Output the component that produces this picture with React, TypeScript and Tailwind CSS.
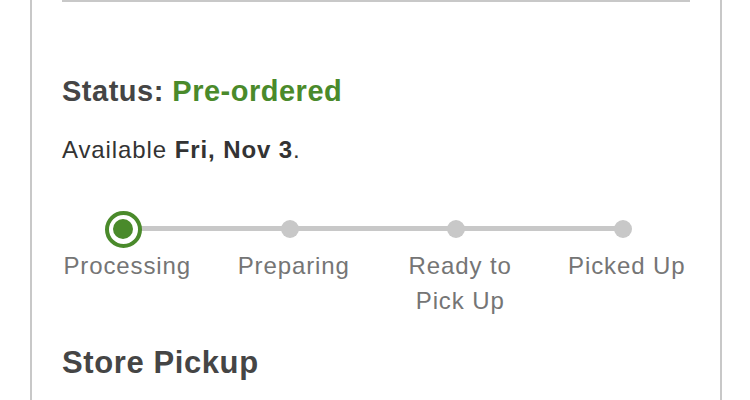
import React from "react";

const steps = [
  { label: ["Processing"], active: true },
  { label: ["Preparing"], active: false },
  { label: ["Ready to", "Pick Up"], active: false },
  { label: ["Picked Up"], active: false },
];

export default function App() {
  return (
    <div
      className="w-[750px] h-[400px] overflow-hidden bg-white"
      style={{ fontFamily: '"Liberation Sans", Arial, Helvetica, sans-serif' }}
    >
      <div className="ml-[30px] w-[692px] h-[400px] border-x-2 border-[#c8c8c8] px-[30px]">
        <div className="h-[2px] bg-[#c8c8c8]" />
        <div className="mt-[72px] text-[29px] leading-[34px] font-bold tracking-[0.5px] text-[#454545]">
          Status: <span className="text-[#4a8a2b]">Pre-ordered</span>
        </div>
        <div className="mt-[27px] text-[24px] leading-[30px] tracking-[0.9px] text-[#333333]">
          Available <span className="font-bold">Fri, Nov 3</span>.
        </div>
        <div className="relative mt-[46px] ml-[-22px] w-[666px] grid grid-cols-4">
          <div className="absolute left-[83px] right-[83px] top-[15px] h-[5px] bg-[#c8c8c8]" />
          {steps.map((s, i) => (
            <div key={i} className="flex flex-col items-center">
              <div className="relative z-10 h-[36px] flex items-center justify-center">
                {s.active ? (
                  <div className="w-[37px] h-[37px] rounded-full border-[4px] border-[#4a8a2b] bg-white flex items-center justify-center">
                    <div className="w-[20px] h-[20px] rounded-full bg-[#4a8a2b]" />
                  </div>
                ) : (
                  <div className="w-[18px] h-[18px] rounded-full bg-[#c8c8c8]" />
                )}
              </div>
              <div className="mt-px pl-[8px] text-center text-[24px] leading-[35px] tracking-[0.9px] text-[#757575] whitespace-nowrap">
                {s.label.map((l, j) => (
                  <div key={j}>{l}</div>
                ))}
              </div>
            </div>
          ))}
        </div>
        <div className="mt-[27px] text-[31px] leading-[36px] font-bold tracking-[0.6px] text-[#454545]">
          Store Pickup
        </div>
      </div>
    </div>
  );
}
